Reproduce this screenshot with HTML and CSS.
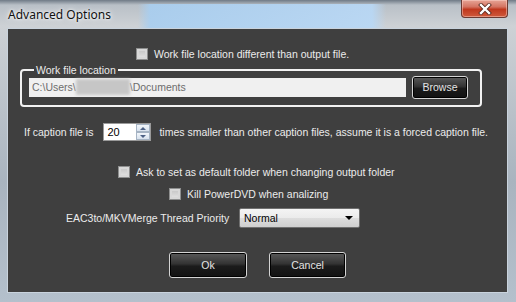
FILE: index.html
```html
<!DOCTYPE html>
<html lang="en">
<head>
  <meta charset="UTF-8">
  <title>Advanced Options</title>
  <link rel="stylesheet" href="styles.css">
</head>
<body>
  <div class="window">
    <div class="titlebar">
      <span class="title">Advanced Options</span>
      <div class="close">
        <svg width="14" height="12" viewBox="0 0 14 12">
          <path d="M3 2 L11 10 M11 2 L3 10" stroke="#5a2a20" stroke-width="4" stroke-linecap="square"/>
          <path d="M3 2 L11 10 M11 2 L3 10" stroke="#ffffff" stroke-width="2.4" stroke-linecap="square"/>
        </svg>
      </div>
    </div>

    <div class="client">
      <label class="row row-workfile">
        <span class="check"></span>
        <span>Work file location different than output file.</span>
      </label>

      <fieldset class="group">
        <legend>Work file location</legend>
        <div class="path">C:\Users\<span class="blur"></span>\Documents</div>
        <div class="btn btn-browse">Browse</div>
      </fieldset>

      <div class="row row-caption">
        <span class="caption-label">If caption file is</span>
        <div class="spinner">
          <span class="spin-value">20</span>
          <div class="spin-buttons">
            <span class="spin-up"></span>
            <span class="spin-down"></span>
          </div>
        </div>
        <span>times smaller than other caption files, assume it is a forced caption file.</span>
      </div>

      <label class="row row-ask">
        <span class="check"></span>
        <span>Ask to set as default folder when changing output folder</span>
      </label>

      <label class="row row-kill">
        <span class="check"></span>
        <span>Kill PowerDVD when analizing</span>
      </label>

      <div class="row row-priority">
        <span class="priority-label">EAC3to/MKVMerge Thread Priority</span>
        <div class="combo">
          <span>Normal</span>
          <span class="combo-arrow"></span>
        </div>
      </div>

      <div class="row row-buttons">
        <div class="btn btn-ok">Ok</div>
        <div class="btn btn-cancel">Cancel</div>
      </div>
    </div>
  </div>
</body>
</html>
```

FILE: styles.css
```css
body {
  margin: 0;
  background: #9aa6b2;
}
.window {
  width: 516px;
  height: 302px;
  background:
    linear-gradient(to right, rgba(160,200,238,0) 138px, rgba(168,206,240,0.9) 150px, rgba(184,216,246,0.9) 372px, rgba(160,200,238,0) 386px) 0 4px / 100% 24px no-repeat,
    linear-gradient(to bottom, #6f7a86 0, #b9c0c7 5px, #cdd1d5 26px, #a9b4bf 60%, #b4c0cc 100%);
  overflow: hidden;
}
.titlebar {
  height: 28px;
  display: flex;
  justify-content: space-between;
  align-items: flex-start;
}
.title {
  font-family: "Noto Sans", "Open Sans", sans-serif;
  font-size: 12px;
  color: #111;
  padding: 6px 0 0 8px;
  text-shadow: 0 0 6px #fff, 0 0 3px #fff;
}
.close {
  width: 47px;
  height: 18px;
  margin-right: 8px;
  box-sizing: border-box;
  border: 1px solid #6b3a32;
  border-top: none;
  border-radius: 0 0 4px 4px;
  background: linear-gradient(to bottom, #e7a596 0, #d47462 40%, #c0381e 55%, #cf5a3c 100%);
  box-shadow: inset 0 0 0 1px rgba(255,220,210,0.45);
  display: flex;
  align-items: center;
  justify-content: center;
}
.client {
  margin-left: 7px;
  width: 501px;
  height: 265px;
  box-sizing: border-box;
  padding-top: 18px;
  background: #3f3f3f;
  border: 1px solid #c9d3dd;
  font-family: "Liberation Sans", Arial, sans-serif;
  font-size: 10.5px;
  color: #ececec;
}
.row {
  display: flex;
  align-items: center;
  white-space: nowrap;
}
.check {
  width: 12px;
  height: 12px;
  box-sizing: border-box;
  border: 1px solid #8e8f8f;
  background: linear-gradient(to bottom, #c2c2c2, #e6e6e6);
  box-shadow: inset 0 0 0 2px #d8d8d8;
  margin-right: 6px;
  flex: none;
}
.row-workfile {
  height: 13px;
  padding-left: 128px;
}
.group {
  margin: 4px 0 0 12px;
  width: 462px;
  height: 43px;
  box-sizing: border-box;
  padding: 0 12px 0 7px;
  border: 2px solid #f2f2f2;
  border-radius: 4px;
  display: flex;
  align-items: center;
  justify-content: space-between;
}
.group legend {
  padding: 0 2px;
  margin-left: 5px;
  color: #ececec;
}
.path {
  width: 377px;
  height: 19px;
  box-sizing: border-box;
  padding-left: 3px;
  background: #f0f0f0;
  color: #6d6d6d;
  display: flex;
  align-items: center;
  margin-top: -7px;
}
.blur {
  display: inline-block;
  width: 54px;
  height: 16px;
  background: #c6c6c6;
  filter: blur(1.5px);
}
.btn {
  box-sizing: border-box;
  border: 1px solid #d4d4d4;
  border-radius: 3px;
  background: linear-gradient(to bottom, #5a5a5a 0, #333 45%, #1b1b1b 55%, #121212 100%);
  box-shadow: inset 0 0 0 1px #000;
  color: #e4e4e4;
  display: flex;
  align-items: center;
  justify-content: center;
}
.btn-browse {
  width: 56px;
  height: 23px;
  margin-top: -7px;
}
.row-caption {
  height: 18px;
  margin-top: 16px;
  padding-left: 16px;
}
.caption-label {
  margin-right: 10px;
}
.spinner {
  width: 48px;
  height: 18px;
  box-sizing: border-box;
  border: 1px solid #9a9a9a;
  background: #fff;
  color: #000;
  display: flex;
  justify-content: space-between;
  margin-right: 8px;
  font-size: 11px;
}
.spin-value {
  padding: 2px 0 0 3px;
}
.spin-buttons {
  width: 14px;
  display: flex;
  flex-direction: column;
}
.spin-up, .spin-down {
  flex: 1;
  border: 1px solid #a6b4c4;
  background: linear-gradient(to bottom, #f2f6fb, #d8e2ee);
  position: relative;
}
.spin-up::after, .spin-down::after {
  content: "";
  position: absolute;
  left: 3px;
  top: 2px;
  border-left: 3px solid transparent;
  border-right: 3px solid transparent;
}
.spin-up::after {
  border-bottom: 3px solid #4d6185;
}
.spin-down::after {
  border-top: 3px solid #4d6185;
}
.row-ask {
  height: 13px;
  margin-top: 24px;
  padding-left: 110px;
}
.row-kill {
  height: 13px;
  margin-top: 9px;
  padding-left: 161px;
}
.row-priority {
  height: 20px;
  margin-top: 8px;
  padding-left: 58px;
}
.priority-label {
  width: 173px;
}
.combo {
  width: 121px;
  height: 20px;
  box-sizing: border-box;
  border: 1px solid #707070;
  border-radius: 2px;
  background: linear-gradient(to bottom, #f4f4f4 0, #ebebeb 50%, #dddddd 51%, #cfcfcf 100%);
  color: #000;
  display: flex;
  align-items: center;
  justify-content: space-between;
  padding: 0 6px 0 4px;
}
.combo-arrow {
  border-left: 4px solid transparent;
  border-right: 4px solid transparent;
  border-top: 4px solid #000;
}
.row-buttons {
  margin-top: 24px;
  padding-left: 161px;
  gap: 22px;
}
.btn-ok {
  width: 78px;
  height: 26px;
}
.btn-cancel {
  width: 77px;
  height: 26px;
}
```
